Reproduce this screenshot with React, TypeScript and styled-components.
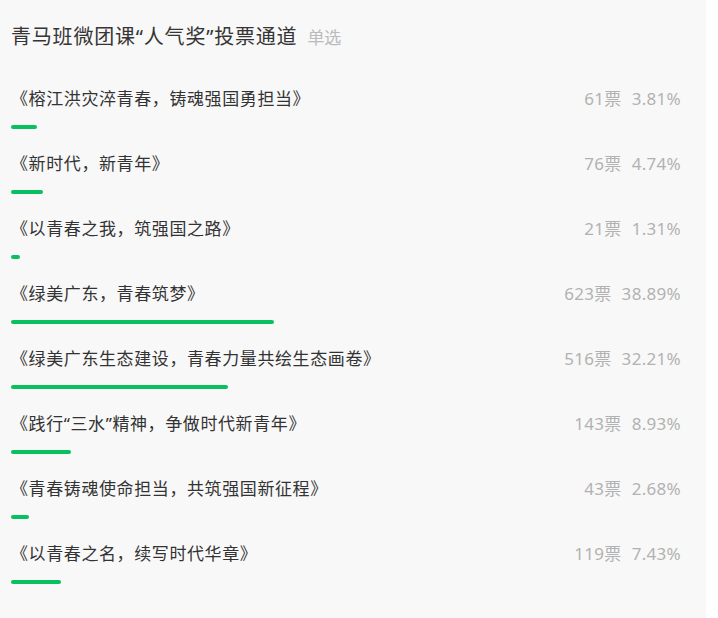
import React from "react";
import styled, { createGlobalStyle } from "styled-components";

const GlobalStyle = createGlobalStyle`
  html, body {
    margin: 0;
    padding: 0;
    background: #ffffff;
  }
  body {
    font-family: "Noto Sans", "Noto Sans CJK SC", sans-serif;
  }
`;

const Page = styled.div`
  width: 706px;
  min-height: 618px;
  box-sizing: border-box;
  background: #f8f8f8;
  padding: 23px 20px 0 11px;
`;

const Header = styled.div`
  display: flex;
  align-items: baseline;
  gap: 10px;
  height: 28px;
  line-height: 28px;
  margin-bottom: 36px;
`;

const Title = styled.h1`
  margin: 0;
  font-size: 20px;
  font-weight: 400;
  color: #353535;
  letter-spacing: 0.8px;
`;

const Mode = styled.span`
  font-size: 17px;
  color: #bbbbbb;
`;

const List = styled.div`
  display: flex;
  flex-direction: column;
`;

const Row = styled.div`
  height: 65px;
  display: flex;
  flex-direction: column;
`;

const Line = styled.div`
  display: flex;
  justify-content: space-between;
  align-items: center;
  height: 24px;
  line-height: 24px;
  font-size: 17px;
`;

const Name = styled.span`
  color: #333333;
  letter-spacing: 0.6px;
`;

const Stats = styled.span`
  display: flex;
  gap: 10px;
  color: #b2b2b2;
  margin-right: 5px;
  letter-spacing: 0.3px;
`;

const Track = styled.div`
  margin-top: 14px;
  height: 4px;
`;

const Bar = styled.div`
  height: 4px;
  border-radius: 2px;
  background: #07c160;
`;

const items = [
  { name: "《榕江洪灾淬青春，铸魂强国勇担当》", votes: 61, pct: 3.81 },
  { name: "《新时代，新青年》", votes: 76, pct: 4.74 },
  { name: "《以青春之我，筑强国之路》", votes: 21, pct: 1.31 },
  { name: "《绿美广东，青春筑梦》", votes: 623, pct: 38.89 },
  { name: "《绿美广东生态建设，青春力量共绘生态画卷》", votes: 516, pct: 32.21 },
  { name: "《践行“三水”精神，争做时代新青年》", votes: 143, pct: 8.93 },
  { name: "《青春铸魂使命担当，共筑强国新征程》", votes: 43, pct: 2.68 },
  { name: "《以青春之名，续写时代华章》", votes: 119, pct: 7.43 },
];

export default function App() {
  return (
    <>
      <GlobalStyle />
      <Page>
        <Header>
          <Title>青马班微团课“人气奖”投票通道</Title>
          <Mode>单选</Mode>
        </Header>
        <List>
          {items.map((it) => (
            <Row key={it.name}>
              <Line>
                <Name>{it.name}</Name>
                <Stats>
                  <span>{it.votes}票</span>
                  <span>{it.pct.toFixed(2)}%</span>
                </Stats>
              </Line>
              <Track>
                <Bar style={{ width: `${it.pct}%` }} />
              </Track>
            </Row>
          ))}
        </List>
      </Page>
    </>
  );
}
